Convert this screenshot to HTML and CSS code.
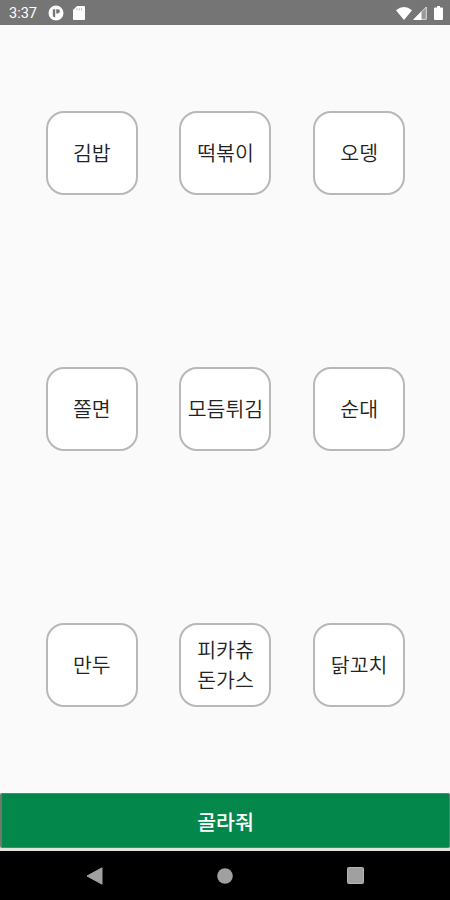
FILE: index.html
```html
<!DOCTYPE html>
<html lang="ko">

<head>
    <meta charset="utf-8">
    <title>골라줘</title>
    <link rel="stylesheet" href="styles.css">
</head>

<body>
    <header class="status">
        <span class="time">3:37</span>
        <svg class="app-icon" width="16" height="16" viewBox="0 0 16 16">
            <circle cx="8" cy="8" r="7.5" fill="#fff" />
            <path d="M4.8 4.2h2.4v8H6q-1.2-.6-1.2-2zM8.2 4.2h1.6a2 2 0 0 1 0 4.2H8.2z" fill="#757575" />
        </svg>
        <svg class="sd-icon" width="12" height="14" viewBox="0 0 12 14">
            <path d="M4 0h7q1 0 1 1v12q0 1-1 1H1q-1 0-1-1V4z" fill="#fff" />
            <path d="M4 2.3v2M6.3 2.3v2M8.6 2.3v2" stroke="#b5b5b5" stroke-width="1" />
        </svg>
        <span class="spacer"></span>
        <svg width="16" height="13" viewBox="0 0 16 13">
            <path d="M0 3.2Q8-3 16 3.2L8 13z" fill="#fff" />
        </svg>
        <svg class="signal" width="14" height="14" viewBox="0 0 14 14">
            <path d="M13.3 1v12.3H1z" fill="#999" stroke="#ddd" stroke-width="1" />
            <path d="M8.5 5.5V14H0z" fill="#fff" />
        </svg>
        <svg class="battery" width="9" height="14" viewBox="0 0 9 14">
            <path d="M3 0h3v1.5h2q1 0 1 1V13q0 1-1 1H1q-1 0-1-1V2.5q0-1 1-1h2z" fill="#fff" />
        </svg>
    </header>

    <main class="menu">
        <button class="item">김밥</button>
        <button class="item">떡볶이</button>
        <button class="item">오뎅</button>
        <button class="item">쫄면</button>
        <button class="item">모듬튀김</button>
        <button class="item">순대</button>
        <button class="item">만두</button>
        <button class="item">피카츄<br>돈가스</button>
        <button class="item">닭꼬치</button>
    </main>

    <div class="pick-bar">
        <button class="pick">골라줘</button>
    </div>

    <nav class="nav">
        <svg width="17" height="18" viewBox="0 0 17 18">
            <path d="M16 .8v16.4L1 9z" fill="#a0a0a0" stroke="#a0a0a0" stroke-linejoin="round" />
        </svg>
        <svg width="16" height="16" viewBox="0 0 16 16">
            <circle cx="8" cy="8" r="7.8" fill="#a0a0a0" />
        </svg>
        <svg width="17" height="17" viewBox="0 0 17 17">
            <rect x=".5" y=".5" width="16" height="16" rx="1" fill="#a0a0a0" stroke="#b4b4b4" />
        </svg>
    </nav>
</body>

</html>
```
FILE: styles.css
```css
* {
    box-sizing: border-box;
}

body {
    display: flex;
    flex-direction: column;
    height: 900px;
    margin: 0;
    background: #fafafa;
    font-family: "Noto Sans CJK KR", sans-serif;
    overflow: hidden;
}

button {
    font-family: inherit;
    margin: 0;
    padding: 0;
}

.status {
    display: flex;
    align-items: center;
    height: 25px;
    padding: 1px 7px 0 9px;
    background: #757575;
    color: #fff;
}

.time {
    width: 39px;
    font: 14.5px Roboto, sans-serif;
}

.sd-icon {
    margin-left: 9px;
}

.spacer {
    flex: 1;
}

.signal {
    margin-left: 1px;
}

.battery {
    margin-left: 7px;
}

.menu {
    display: grid;
    grid-template-columns: repeat(3, 1fr);
    grid-template-rows: repeat(3, 256px);
    place-items: center;
    padding: 0 24px 0 25px;
}

.item {
    width: 92px;
    height: 84px;
    padding-bottom: 2px;
    border: 2px solid #b8b8b8;
    border-radius: 18px;
    background: #fff;
    color: #222;
    font-size: 20.5px;
    font-weight: 350;
    line-height: 30px;
    white-space: nowrap;
}

.pick-bar {
    height: 58px;
    padding-bottom: 3px;
    background: #e4e4de;
}

.pick {
    display: block;
    width: 100%;
    height: 55px;
    border: 1px solid #6c7a6c;
    border-left-width: 2px;
    border-radius: 2px;
    background: #04874b;
    color: #fff;
    font-size: 20.5px;
    font-weight: 500;
    line-height: 30px;
}

.nav {
    display: flex;
    align-items: center;
    justify-content: space-between;
    height: 49px;
    padding: 0 86px;
    background: #000;
}
```
